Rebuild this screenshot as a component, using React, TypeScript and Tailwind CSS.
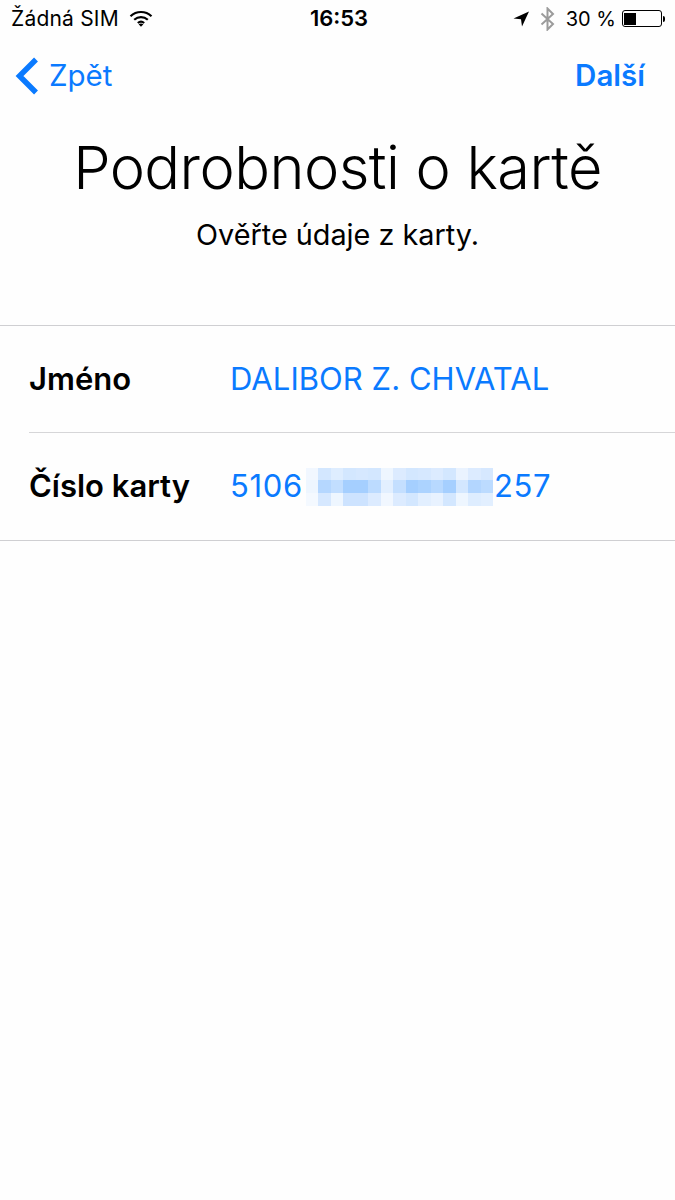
const cells = [
  ['#f1f7ff', '#d3e7ff', '#deedff', '#d3e7ff', '#d6e8ff', '#d3e7ff', '#eef6ff', '#dcebff', '#d3e7ff', '#d6e8ff', '#dcebff', '#d3e7ff', '#eaf3ff', '#dcebff', '#d6e8ff'],
  ['#eef6ff', '#b5d7ff', '#c2deff', '#a5cfff', '#a5cfff', '#bcdbff', '#e2efff', '#c4dfff', '#a5cfff', '#acd3ff', '#b8d9ff', '#a5cfff', '#d3e7ff', '#b3d6ff', '#bcdbff'],
  ['#f4f9ff', '#d6e8ff', '#eef6ff', '#cde3ff', '#cde3ff', '#dcebff', '#f1f7ff', '#dcebff', '#d3e7ff', '#e2efff', '#e8f2ff', '#d3e7ff', '#eef6ff', '#deedff', '#e2efff'],
];

function Wifi() {
  return (
    <svg width="24" height="17" viewBox="0 0 24 17" fill="none" stroke="#000" strokeWidth="2.2">
      <path d="M1.5 6.2C7.5.6 16.5.6 22.5 6.2" />
      <path d="M5.2 9.8c4-3.6 9.6-3.6 13.6 0" />
      <path d="M8.8 13c2-1.6 4.400-1.600 6.400 0" />
      <path d="M12 16.800 9.600 14.300c1.500-1 3.300-1 4.800 0z" fill="#000" stroke="none" />
    </svg>
  );
}

function Arrow() {
  return (
    <svg width="16" height="16" viewBox="0 0 16 16">
      <path d="M16 0.500 0.500 7.500 8 8.200 9 15.500z" fill="#000" />
    </svg>
  );
}

function Bluetooth() {
  return (
    <svg width="15" height="24" viewBox="0 0 15 24" fill="none" stroke="#9b9b9b" strokeWidth="2">
      <path d="M1.500 6.500 13 17 7.500 22.500V1.500L13 7 1.500 17.500" />
    </svg>
  );
}

function Battery() {
  return (
    <div className="flex items-center">
      <div className="h-[17px] w-[40px] rounded-[3px] border border-black p-[1.5px]">
        <div className="h-full w-[12px] bg-black" />
      </div>
      <div className="ml-[1px] h-[6px] w-[2px] rounded-r-sm bg-black" />
    </div>
  );
}

export default function App() {
  return (
    <main className="h-[1200px] w-[675px] overflow-hidden bg-[#fefefe] text-black [font-family:Inter,'Liberation_Sans',sans-serif]">
      <div className="flex h-[37px] items-center justify-between pl-[11px] pr-[10px] text-[20px]">
        <div className="flex w-[200px] items-center">
          <span className="text-[21px] tracking-[0.2px]">Žádná SIM</span>
          <span className="ml-[10px]"><Wifi /></span>
        </div>
        <span className="ml-[2px] text-[22px] font-semibold">16:53</span>
        <div className="flex w-[200px] items-center justify-end">
          <Arrow />
          <span className="ml-[11px]"><Bluetooth /></span>
          <span className="ml-[11px] mr-[6px] text-[20px]">30 %</span>
          <Battery />
        </div>
      </div>

      <div className="flex h-[77px] items-center justify-between pl-[15px] pr-[30px] text-[#0a7aff]">
        <div className="flex items-center">
          <svg width="24" height="38" viewBox="0 0 24 38" fill="none" stroke="#0a7aff" strokeWidth="5.500">
            <path d="M21 2.500 4.500 19 21 35.500" />
          </svg>
          <span className="ml-[10px] text-[29.500px]">Zpět</span>
        </div>
        <span className="text-[29.500px] font-semibold">Další</span>
      </div>

      <h1 className="mt-[19px] text-center text-[59.500px] font-light leading-[68px] tracking-[-0.55px]">Podrobnosti o kartě</h1>
      <p className="mt-[17px] text-center text-[28.800px] leading-[34px]">Ověřte údaje z karty.</p>

      <section className="mt-[73px] border-y border-[#cfcfd2] pl-[29px]">
        <div className="flex h-[107px] items-center border-b border-[#d6d6d8] text-[31px]">
          <span className="w-[201px] font-semibold">Jméno</span>
          <span className="text-[#0a7aff] tracking-[0.05px]">DALIBOR Z. CHVATAL</span>
        </div>
        <div className="flex h-[107px] items-center text-[31px]">
          <span className="w-[201px] font-semibold">Číslo karty</span>
          <span className="w-[76px] text-[#0a7aff] tracking-[0.7px]">5106</span>
          <div className="grid h-[38px] w-[187px] grid-cols-[repeat(15,1fr)] grid-rows-3">
            {cells.flat().map((c, i) => <div key={i} style={{ backgroundColor: c }} />)}
          </div>
          <span className="ml-[1px] text-[#0a7aff] tracking-[0.6px]">257</span>
        </div>
      </section>
    </main>
  );
}
